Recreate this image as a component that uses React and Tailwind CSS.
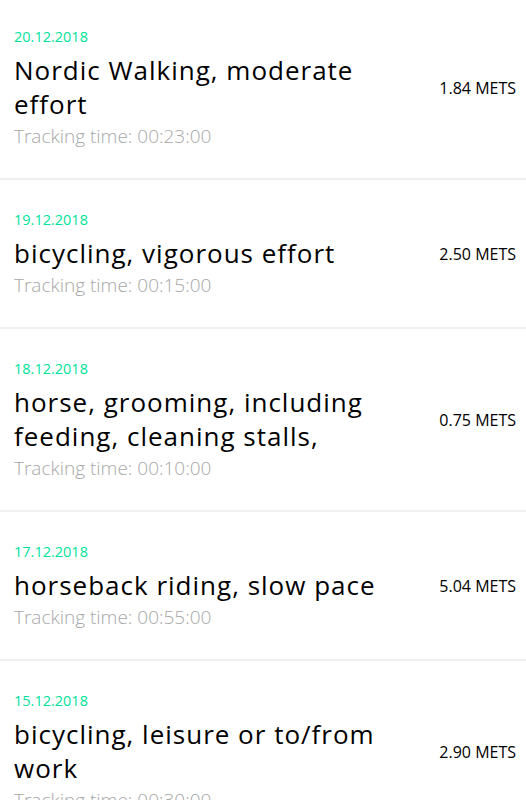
const entries = [
  { date: "20.12.2018", title: "Nordic Walking, moderate effort", time: "00:23:00", mets: "1.84" },
  { date: "19.12.2018", title: "bicycling, vigorous effort", time: "00:15:00", mets: "2.50" },
  { date: "18.12.2018", title: "horse, grooming, including feeding, cleaning stalls,", time: "00:10:00", mets: "0.75" },
  { date: "17.12.2018", title: "horseback riding, slow pace", time: "00:55:00", mets: "5.04" },
  { date: "15.12.2018", title: "bicycling, leisure or to/from work", time: "00:30:00", mets: "2.90" },
];

export default function App() {
  return (
    <div className="w-[526px] h-[800px] overflow-hidden bg-white" style={{ fontFamily: "'Open Sans', 'Noto Sans', sans-serif" }}>
      {entries.map((e, i) => (
        <div
          key={i}
          className={`flex items-center justify-between pl-[14px] pr-[10px] pb-[30px] border-b-2 border-[#f0f0f0] ${i === 0 ? "pt-[27px]" : "pt-[30px]"}`}
        >
          <div className="w-[390px] flex flex-col">
            <div className="text-[14.5px] leading-[20px] text-[#00e39b]">{e.date}</div>
            <div className="mt-[6px] text-[26px] leading-[34px] tracking-[1px] text-black">{e.title}</div>
            <div className="mt-[3px] text-[19px] leading-[24px] font-light text-[#a8a8a8]">Tracking time: {e.time}</div>
          </div>
          <div className="text-[16px] text-black whitespace-nowrap">{e.mets} METS</div>
        </div>
      ))}
    </div>
  );
}
